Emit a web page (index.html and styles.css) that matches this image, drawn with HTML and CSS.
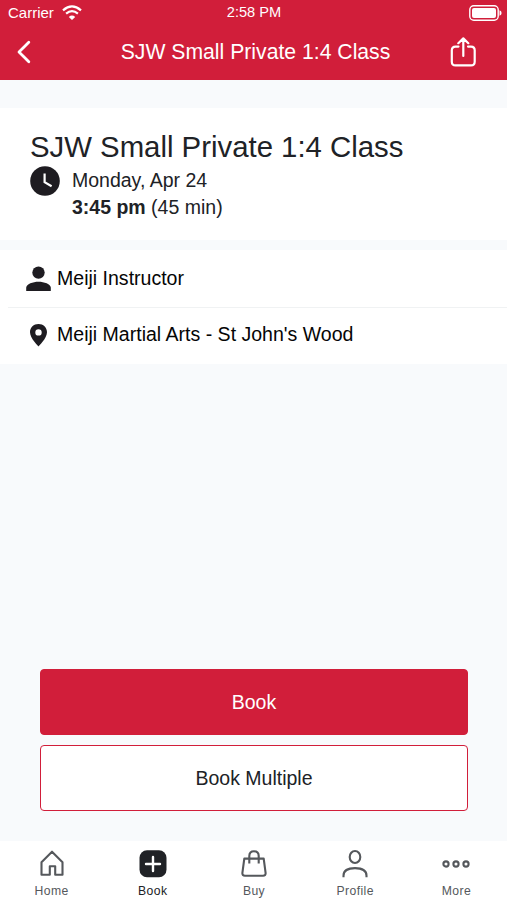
FILE: index.html
```html
<!DOCTYPE html>
<html lang="en">
<head>
<meta charset="utf-8">
<title>SJW Small Private 1:4 Class</title>
<link rel="stylesheet" href="styles.css">
</head>
<body>
<div class="app">
  <header class="header">
    <div class="status">
      <div class="carrier"><span>Carrier</span>
        <svg width="20" height="15" viewBox="0 0 20 15" fill="none" stroke="#fff" stroke-width="2.2"><path d="M1 5.3Q10-2.5 19 5.3M4.1 8.7Q10 3.6 15.9 8.7"/><path d="M6.8 11.9Q10 9.2 13.2 11.9L10 15z" fill="#fff" stroke="none"/></svg>
      </div>
      <span class="clock">2:58 PM</span>
      <svg class="battery" width="33" height="16" viewBox="0 0 33 16"><rect x=".8" y=".8" width="28.4" height="14.4" rx="4" fill="none" stroke="#fff" stroke-width="1.4"/><rect x="3" y="3" width="24" height="10" rx="2" fill="#fff"/><path d="M30.5 5.2Q32.6 6 32.6 8T30.5 10.8z" fill="#fff"/></svg>
    </div>
    <nav class="navbar">
      <svg class="back" width="16" height="24" viewBox="0 0 16 24" fill="none" stroke="#fff" stroke-width="2.8" stroke-linecap="round" stroke-linejoin="round"><path d="M12.8 2.3L3 12l9.8 9.7"/></svg>
      <h1>SJW Small Private 1:4 Class</h1>
      <svg class="share" width="26" height="30" viewBox="0 0 26 30" fill="none" stroke="#fff" stroke-width="2.2" stroke-linecap="round" stroke-linejoin="round"><path d="M8.500 9.600H5.500Q1.800 9.600 1.800 13.300v11.400Q1.800 28.400 5.500 28.400h15.500Q24.700 28.400 24.700 24.700V13.300Q24.700 9.600 21 9.600h-3M13.300 19V2M8.300 6.200L13.300 1.400l5 4.800"/></svg>
    </nav>
  </header>
  <main>
    <section class="summary">
      <h2>SJW Small Private 1:4 Class</h2>
      <div class="when">
        <svg width="30" height="30" viewBox="0 0 30 30"><circle cx="15" cy="15" r="14.8" fill="#1e1c21"/><path d="M14.6 7.500v8.700l7 4" fill="none" stroke="#fff" stroke-width="2.2"/></svg>
        <div class="when-text"><p>Monday, Apr 24</p><p><b>3:45 pm</b> (45 min)</p></div>
      </div>
    </section>
    <section class="details">
      <div class="row">
        <svg width="26" height="26" viewBox="0 0 26 26" fill="#1e1c21"><circle cx="12.5" cy="6.6" r="6.2"/><path d="M.2 25v-3.2C.2 18 7 15.8 12.5 15.8s12.3 2.2 12.3 6V25z"/></svg>
        <span>Meiji Instructor</span>
      </div>
      <div class="row location">
        <svg width="26" height="26" viewBox="0 0 26 26" fill="#1e1c21" fill-rule="evenodd"><path d="M12.500 3C7.700 3 4 6.500 4 11.200c0 6 8.500 14.200 8.500 14.200S21 17.200 21 11.200C21 6.500 17.300 3 12.500 3zM12.500 8.200a3.200 3.200 0 1 1 0 6.400 3.200 3.200 0 0 1 0-6.400z"/></svg>
        <span>Meiji Martial Arts - St John's Wood</span>
      </div>
    </section>
  </main>
  <div class="actions">
    <button class="primary">Book</button>
    <button>Book Multiple</button>
  </div>
  <nav class="tabs">
    <a><svg width="30" height="30" viewBox="0 0 30 30"><path d="M4.500 13.200L15 2.700l10.500 10.500v12.600h-7.300v-8.500h-5.400v8.500H4.500z"/></svg><span>Home</span></a>
    <a class="active"><svg width="30" height="30" viewBox="0 0 30 30"><rect x="1.500" y="1.300" width="27" height="27" rx="7.500" fill="#202226" stroke="none"/><path d="M15 8v14M8 15h14" stroke="#fff" stroke-width="2.400" stroke-linecap="round"/></svg><span>Book</span></a>
    <a><svg width="30" height="30" viewBox="0 0 30 30"><path d="M5.300 9.600h19.400l1.900 14.200q.3 3-2.600 3H6q-2.900 0-2.600-3zM10.300 14.500V7Q10.300 2.300 15 2.300T19.700 7v7.500"/></svg><span>Buy</span></a>
    <a><svg width="30" height="30" viewBox="0 0 30 30"><ellipse cx="15" cy="8" rx="5.300" ry="6"/><path d="M3.500 28.300v-1.600Q3.500 19.100 15 19.100t11.500 7.600v1.600"/></svg><span>Profile</span></a>
    <a><svg width="30" height="30" viewBox="0 0 30 30"><circle cx="5" cy="15" r="2.600"/><circle cx="15" cy="15" r="2.600"/><circle cx="25" cy="15" r="2.600"/></svg><span>More</span></a>
  </nav>
</div>
</body>
</html>
```
FILE: styles.css
```css
* { box-sizing: border-box; }
body { margin: 0; font-family: "Liberation Sans", Arial, sans-serif; color: #202226; }
h1, h2, p { margin: 0; font-weight: 400; }
svg { display: block; flex: none; }
.app { display: flex; flex-direction: column; height: 900px; background: #f8fafc; }
.header { height: 80px; background: #d11e3a; color: #fff; }
.status { display: grid; grid-template-columns: 1fr auto 1fr; align-items: center; height: 25px; padding: 0 5px 0 8px; font-size: 14.6px; }
.carrier { display: flex; align-items: center; gap: 8px; font-size: 15px; }
.clock { padding: 0 2px 2px 0; }
.battery { justify-self: end; }
.navbar { display: grid; grid-template-columns: 60px 1fr 60px; align-items: center; height: 53px; padding: 0 14px 0 16px; }
.navbar h1 { padding-left: 2px; font-size: 21.2px; text-align: center; line-height: 24px; white-space: nowrap; }
.share { justify-self: center; }
.summary { height: 132px; margin-top: 28px; padding: 20px 30px 0; background: #fff; }
.summary h2 { font-size: 29.35px; line-height: 38px; }
.when { display: flex; gap: 12px; font-size: 19.5px; line-height: 27px; }
.when-text { padding-top: 1px; }
.details { margin-top: 10px; background: #fff; color: #050505; }
.row { display: flex; align-items: center; gap: 5px; height: 57px; padding-left: 26px; font-size: 19.55px; }
.location { margin-left: 8px; padding: 0 0 4px 18px; border-top: 1px solid #f0f2f3; }
.actions { display: grid; gap: 10px; margin: auto 39px 30px 40px; }
.actions button { height: 66px; padding: 0; border: 1px solid #d11e3a; border-radius: 4px; background: #fff; color: #202226; font: 19.5px "Liberation Sans", Arial, sans-serif; }
.actions .primary { background: #d11e3a; color: #fff; }
.tabs { display: grid; grid-template-columns: repeat(5, 1fr); height: 59px; padding-left: 1px; background: #fff; color: #55585c; }
.tabs a { display: flex; flex-direction: column; align-items: center; padding-top: 8px; font-size: 12.2px; line-height: 15px; letter-spacing: .4px; }
.tabs svg { margin-bottom: 5px; fill: none; stroke: #55585c; stroke-width: 2.1; stroke-linejoin: round; }
.tabs .active { color: #202226; }
```
